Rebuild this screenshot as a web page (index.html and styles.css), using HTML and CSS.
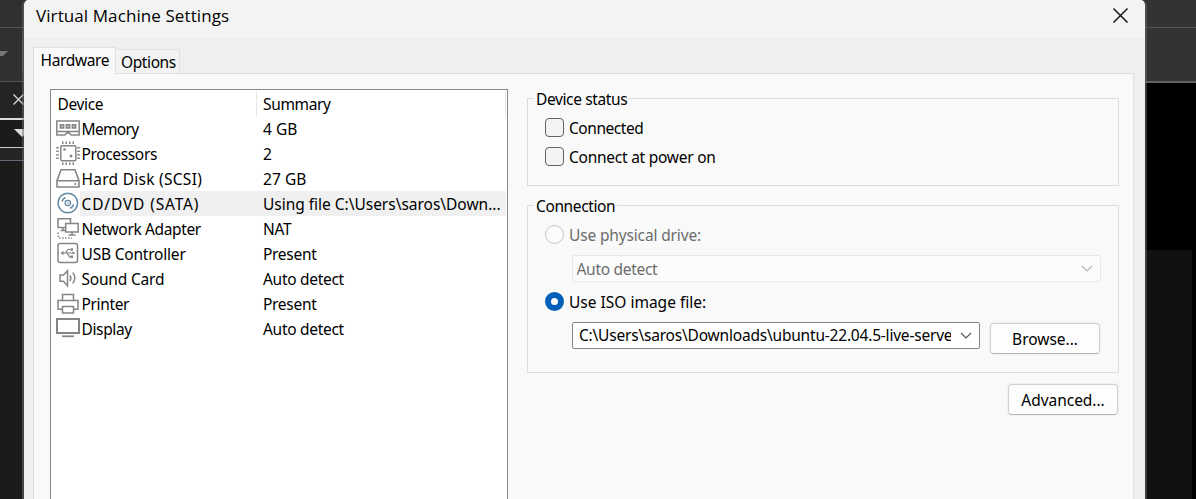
FILE: index.html
```html
<!DOCTYPE html>
<html lang="en">
<head>
<meta charset="utf-8">
<title>Virtual Machine Settings</title>
<link rel="stylesheet" href="styles.css">
</head>
<body>
<div class="screen">
  <aside class="left-app">
    <div class="la-menu"></div>
    <div class="la-tools"><svg width="24" height="53"><path d="M0 23h8l-5 5H0z" fill="#777"/><path d="M22.500 10v35" stroke="#484848"/></svg></div>
    <div class="la-tab"><svg width="24" height="36"><path d="M13.500 12.500l10 10M13.500 22.500l10-10" stroke="#ddd" stroke-width="1.300"/></svg></div>
    <div class="la-drop"><svg width="24" height="27"><path d="M14 9h10v6.500l-2 1.500z" fill="#ddd"/></svg></div>
    <div class="la-gap"></div>
    <div class="la-rest"></div>
  </aside>
  <main class="dialog">
    <header class="titlebar"><h1>Virtual Machine Settings</h1>
      <svg class="close" width="17" height="17"><path d="M1.500 1.500l14 14M15.500 1.500l-14 14" stroke="#16161c" stroke-width="1.500"/></svg>
    </header>
    <nav class="tabs"><div class="tab active">Hardware</div><div class="tab">Options</div></nav>
    <section class="page">
      <div class="list">
        <div class="row head"><span class="name">Device</span><span class="sum">Summary</span></div>
        <div class="row"><svg class="ico" viewBox="0 0 24 25"><g fill="none" stroke="#858585" stroke-width="1.500"><path d="M.8 5h22.400v14h-8l-2-2h-2.400l-2 2h-8zM1 15.500h22"/><path d="M4.500 8.800h3v3h-3zM10.500 8.800h3v3h-3zM16.500 8.800h3v3h-3z" stroke-width="1.800"/></g></svg><span class="name mem">Memory</span><span class="sum wide">4 GB</span></div>
        <div class="row"><svg class="ico" viewBox="0 0 24 25"><g fill="none" stroke="#858585" stroke-width="1.500"><rect x="4.800" y="4.800" width="15" height="15" rx="1"/><path d="M6 1.800h13M6 22.800h13" stroke-width="2.600" stroke-dasharray="1.500 2"/><path d="M1.500 6v13M22.500 6v13" stroke-width="2.600" stroke-dasharray="1.500 2"/></g><circle cx="8.500" cy="8.500" r="1.300" fill="#858585"/><circle cx="15" cy="15" r="1.500" fill="#858585"/></svg><span class="name">Processors</span><span class="sum">2</span></div>
        <div class="row"><svg class="ico" viewBox="0 0 24 25"><path d="M5 3.700h14l4 11v6.300h-22v-6.300zM1 14.700h22" fill="none" stroke="#858585" stroke-width="1.600"/><circle cx="19.300" cy="18" r="1.100" fill="#858585"/></svg><span class="name hd">Hard Disk (SCSI)</span><span class="sum wide">27 GB</span></div>
        <div class="row selected"><svg class="ico" viewBox="0 0 24 25"><g fill="none" stroke="#5f87a3" stroke-width="1.500"><circle cx="11.800" cy="12" r="9.800"/><circle cx="11.800" cy="12" r="2.700" stroke-width="1.200"/><path d="M6 10.500a6 6 0 0 1 3.500-4M17.600 13.500a6 6 0 0 1-3.500 4"/></g><circle cx="11.800" cy="12" r=".8" fill="#5f87a3"/></svg><span class="name cd">CD/DVD (SATA)</span><span class="sum using">Using file C:\Users\saros\Down...</span></div>
        <div class="row"><svg class="ico" viewBox="0 0 24 25"><g fill="none" stroke="#858585" stroke-width="1.500"><path d="M9.500 11.500H2V2.700h12.500V7M4.500 14.500H9M7 11.500v3M9.700 7.500h12.500v8.500H9.700zM16 16v2.800M12.500 19h7"/><path d="M2.200 16.500v5.500H16" stroke-dasharray="1.500 1.600"/></g></svg><span class="name">Network Adapter</span><span class="sum">NAT</span></div>
        <div class="row"><svg class="ico" viewBox="0 0 24 25"><rect x="2" y="2.500" width="19.500" height="19" rx="2" fill="none" stroke="#858585" stroke-width="1.500"/><path d="M7 12h10M9.500 12l2.500-3.500h2.500M11 12l2.500 3.800h1.500" fill="none" stroke="#858585" stroke-width="1.200"/><path d="M4.500 12l3-2.300v4.600zM14.500 7.200H17v2.500h-2.500zM14.500 14.500H17V17h-2.500z" fill="#858585"/><circle cx="17.500" cy="12" r="1.200" fill="#858585"/></svg><span class="name usb">USB Controller</span><span class="sum">Present</span></div>
        <div class="row"><svg class="ico" viewBox="0 0 24 25"><path d="M4 9h3.500l4-4.300v15l-4-4.400H4zM14 9.500q1.700 2.700 0 5.500M16.800 6.500q4 5.500 0 11" fill="none" stroke="#858585" stroke-width="1.500"/></svg><span class="name usb">Sound Card</span><span class="sum">Auto detect</span></div>
        <div class="row"><svg class="ico" viewBox="0 0 24 25"><path d="M6.500 9V3.600h11V9M6 18.300H2V9.500h20v8.800h-4M6.500 15.500h11V22h-11z" fill="none" stroke="#858585" stroke-width="1.500"/></svg><span class="name">Printer</span><span class="sum">Present</span></div>
        <div class="row"><svg class="ico" viewBox="0 0 24 25"><path d="M1 3h22v14H1z" fill="none" stroke="#858585" stroke-width="2"/><path d="M6 20.300h12" stroke="#858585" stroke-width="1.800"/></svg><span class="name">Display</span><span class="sum">Auto detect</span></div>
      </div>
      <div class="panel">
        <fieldset class="status"><legend>Device status</legend>
          <label class="opt"><i class="box"></i><span>Connected</span></label>
          <label class="opt power"><i class="box"></i><span>Connect at power on</span></label>
        </fieldset>
        <fieldset class="conn"><legend>Connection</legend>
          <label class="opt off"><i class="radio"></i><span>Use physical drive:</span></label>
          <div class="combo disabled"><span>Auto detect</span><svg width="12" height="8"><path d="M1 1l5 5 5-5" fill="none" stroke="#b4b4b4" stroke-width="1.200"/></svg></div>
          <label class="opt iso"><i class="radio on"></i><span>Use ISO image file:</span></label>
          <div class="file"><div class="combo"><span class="path">C:\Users\saros\Downloads\ubuntu-22.04.5-live-server</span><svg width="12" height="8"><path d="M1 1l5 5 5-5" fill="none" stroke="#555" stroke-width="1.200"/></svg></div><div class="btn">Browse...</div></div>
        </fieldset>
        <div class="btn adv">Advanced...</div>
      </div>
    </section>
  </main>
  <aside class="right-app"><div class="ra-menu"></div><div class="ra-tools"></div><div class="ra-black"></div><div class="ra-rest"></div></aside>
</div>
</body>
</html>
```
FILE: styles.css
```css
* { box-sizing: border-box; }
body { margin: 0; font: 15.5px/25px "Noto Sans", "DejaVu Sans", sans-serif; letter-spacing: -.3px; color: #000; }
.screen { width: 1196px; height: 499px; display: grid; grid-template-columns: 22px 1125px 49px; overflow: hidden; background: #333; }
svg { display: block; flex: none; }
.left-app { background: #1b1b1b; overflow: hidden; margin-right: -2px; }
.la-menu { height: 28px; background: #303030; border-bottom: 1px solid #505050; }
.la-tools { height: 54px; background: #303030; border-bottom: 1px solid #555; }
.la-tab { height: 38px; background: #242424; border-bottom: 2px solid #ddd; }
.la-drop { height: 28px; background: #1b1b1b; border-bottom: 1px solid #ccc; }
.la-gap { height: 13px; background: #252525; border-bottom: 1px solid #666877; }
.dialog { position: relative; z-index: 1; border: solid rgba(110, 110, 110, .5); border-width: 0 2px; border-radius: 6px 6px 0 0; background: #efefef; background-clip: padding-box; display: flex; flex-direction: column; overflow: hidden; height: 499px; }
.titlebar { height: 38px; flex: none; background: #f3f3f3; display: flex; justify-content: space-between; padding: 7px 16px 0 12px; }
.titlebar h1 { margin: 0; font: 400 17px/18px "Open Sans", "Noto Sans", sans-serif; letter-spacing: .09px; }
.tabs { margin-left: 9px; height: 36px; flex: none; display: flex; align-items: flex-end; position: relative; z-index: 1; }
.tab { width: 64px; height: 25px; border: 1px solid #e0e0e0; border-left: 0; background: #f3f3f3; padding-left: 5px; white-space: nowrap; letter-spacing: -.35px; }
.tab:not(.active) { letter-spacing: -.4px; }
.tab.active { width: 83px; height: 27px; border: 1px solid #e0e0e0; border-bottom: 0; background: #f9f9f9; padding-left: 6.5px; }
.page { margin: -1px 11px 0 9px; flex: 1; background: #f9f9f9; border: solid #e0e0e0; border-width: 1px 1px 0; padding: 15px 13px 0 16px; display: flex; gap: 19px; }
.list { width: 458px; flex: none; background: #fff; border: 1px solid #828790; border-bottom: 0; padding: 1px 1px 0 5px; }
.row { display: flex; height: 25px; line-height: 26px; white-space: nowrap; }
.ico { width: 24px; height: 25px; }
.name { width: 177px; padding-left: 1.5px; letter-spacing: -.36px; }
.name.mem { letter-spacing: -.65px; }
.name.usb { letter-spacing: -.2px; }
.sum { flex: 1; padding-left: 6px; }
.wide { letter-spacing: .05px; }
.name.hd { letter-spacing: .27px; }
.name.cd { letter-spacing: .85px; }
.using { letter-spacing: -.02px; }
.path { letter-spacing: -.2px; }
.selected .name, .selected .sum { background: #f0f0f0; }
.head .name { width: 201px; border-right: 1px solid #e5e5e5; }
.head .sum { border-right: 1px solid #e5e5e5; letter-spacing: -.35px; }
.panel { width: 592px; flex: none; padding-top: 9px; display: flex; flex-direction: column; }
fieldset { margin: 0; border: 1px solid #dcdcdc; padding: 0 17px; min-width: 0; position: relative; width: 592px; }
legend { position: absolute; left: 6px; top: -12px; padding: 0 2px; background: #f9f9f9; letter-spacing: -.38px; }
.status { height: 88px; padding-top: 15px; }
.conn { height: 168px; margin-top: 19px; padding-top: 15px; }
.opt { display: flex; align-items: center; height: 29px; gap: 5px; letter-spacing: -.45px; }
.opt.power { letter-spacing: -.25px; }
.opt.off { letter-spacing: -.15px; }
.opt.iso { letter-spacing: 0; margin-top: 6px; }
.box, .radio { width: 19px; height: 19px; margin-bottom: 2px; border: 1px solid #626262; border-radius: 4px; background: #f3f3f3; }
.radio { border-radius: 50%; border-color: #c5c5c5; background: #fbfbfb; }
.radio.on { border: 6px solid #005fb8; background: #fff; }
.off, .disabled { color: #6d6d6d; }
.combo { height: 27px; border: 1px solid #858585; border-radius: 2px; background: #fff; display: flex; align-items: center; padding: 0 7px 0 6px; }
.combo span { flex: 1; overflow: hidden; white-space: nowrap; margin-right: 9px; }
.combo.disabled { width: 529px; margin: 5px 0 0 27px; border-color: #e8e8e8; background: #fbfbfb; padding-left: 3.5px; }
.combo.disabled span { padding-top: 1px; }
.file { display: flex; gap: 10px; margin: 5px 0 0 27px; align-items: flex-start; }
.file .combo { width: 408px; }
.btn { width: 110px; height: 31px; border: 1px solid #d0d0d0; border-bottom-color: #b8b8b8; border-radius: 4px; background: #fdfdfd; box-shadow: 0 0 0 1px #f0f0f0; text-align: center; line-height: 31px; margin-top: 1px; letter-spacing: -.03px; }
.btn.adv { align-self: flex-end; margin: 11px 1px 0 0; }
.right-app { background: #000; margin-left: -2px; }
.ra-menu { height: 28px; background: #333; border-bottom: 1px solid #555; }
.ra-tools { height: 55px; background: #333; border-bottom: 2px solid #626262; }
.ra-black { height: 167px; }
.ra-rest { height: 249px; width: 47px; background: #111; }
```
